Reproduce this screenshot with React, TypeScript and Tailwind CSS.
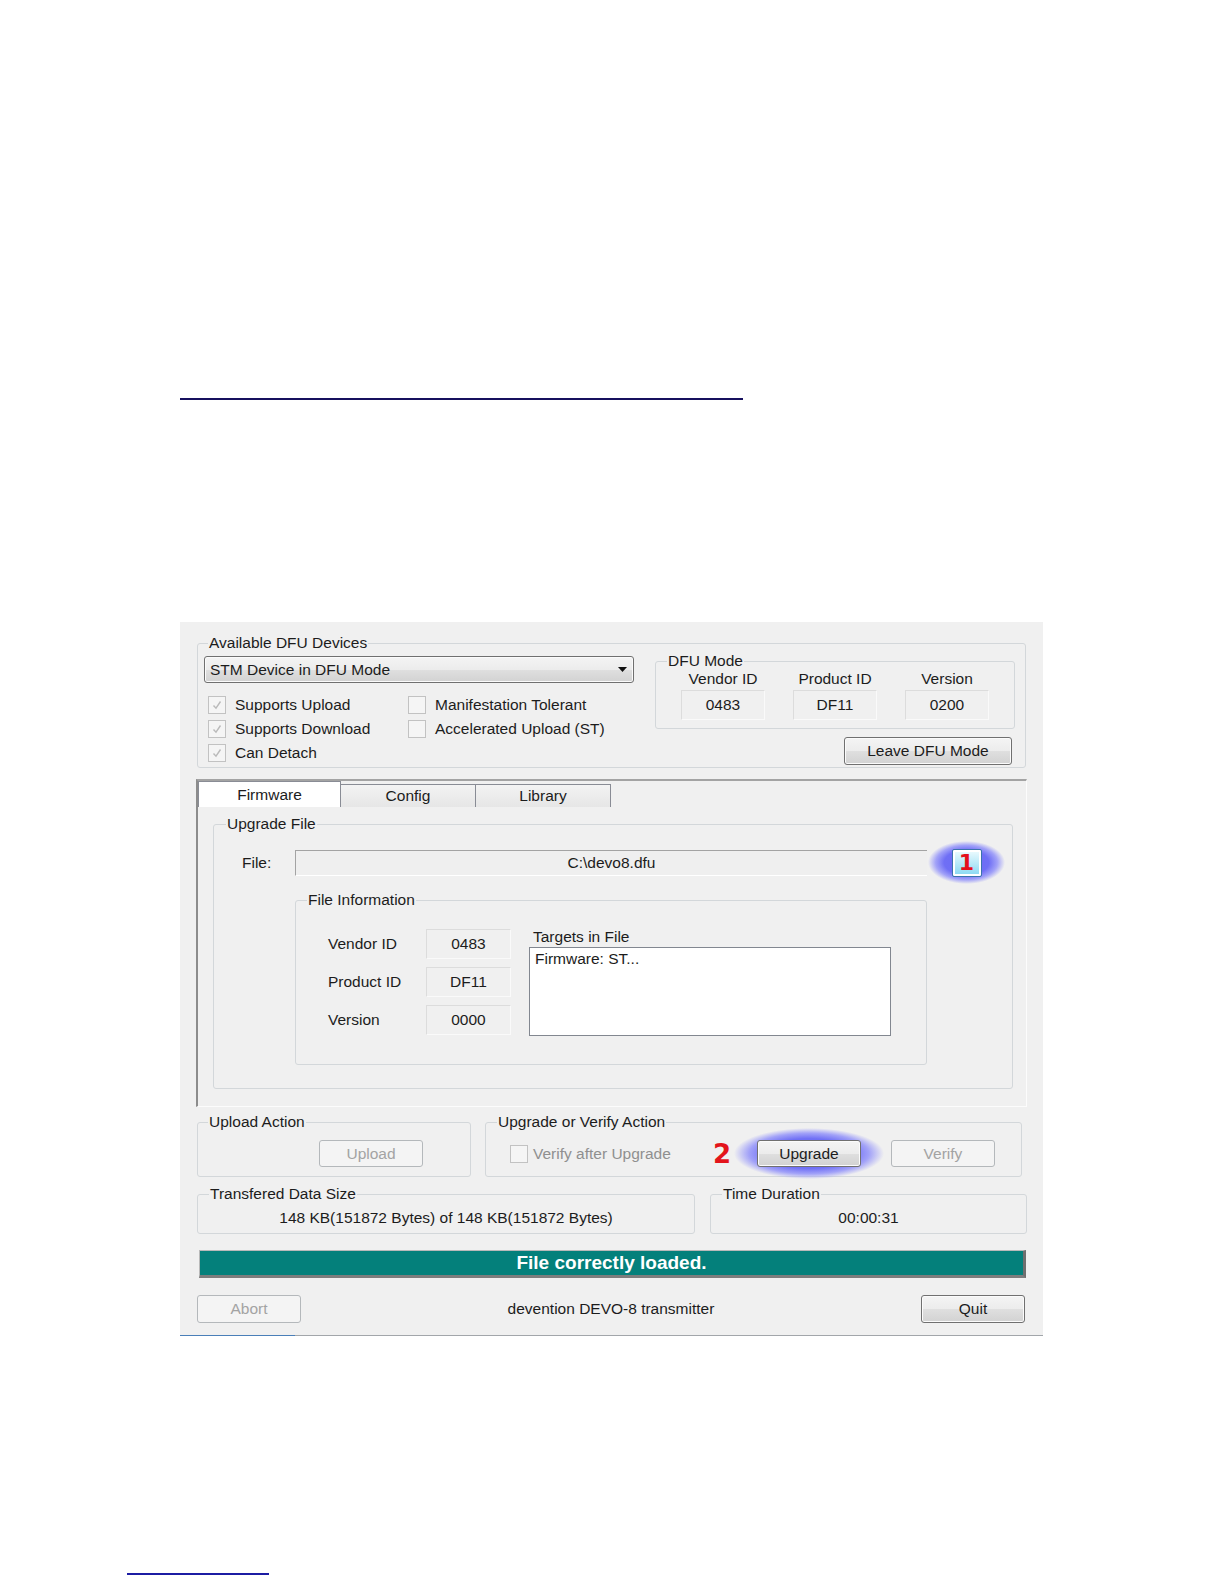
import type { ReactNode } from 'react';

const FONT = "font-['Liberation_Sans',Arial,sans-serif]";
const BTN_BG =
  'border-[#707070] bg-[linear-gradient(#f4f4f4_0%,#ececec_50%,#dfdfdf_51%,#d2d2d2_100%)] shadow-[inset_0_0_0_1px_#fbfbfb] text-[#1c1c1c]';
const GLOW =
  'bg-[radial-gradient(ellipse_closest-side,#6a6af4_0%,#6f6ff5_58%,#a2a2f8_80%,rgba(214,214,255,0)_100%)]';

function Group({
  label,
  className = '',
  legendClass = 'ml-[10px]',
  children,
}: {
  label: string;
  className?: string;
  legendClass?: string;
  children?: ReactNode;
}) {
  return (
    <fieldset className={`min-w-0 rounded-[3px] border border-[#d3d7da] ${className}`}>
      <legend className={`px-[1px] leading-[18px] whitespace-nowrap ${legendClass}`}>{label}</legend>
      {children}
    </fieldset>
  );
}

function Btn({
  children,
  disabled,
  className = '',
}: {
  children: ReactNode;
  disabled?: boolean;
  className?: string;
}) {
  return (
    <div
      className={`flex items-center justify-center rounded-[3px] border ${
        disabled ? 'border-[#b4b8bb] bg-[#f4f4f4] text-[#a3a3a3]' : BTN_BG
      } ${className}`}
    >
      {children}
    </div>
  );
}

function Check({ checked }: { checked?: boolean }) {
  return (
    <div className="w-[18px] h-[18px] shrink-0 border border-[#c2c2c2] bg-[#f5f5f5] flex items-center justify-center">
      {checked && (
        <svg width="12" height="12" viewBox="0 0 12 12">
          <path d="M2.5 6.5 L5 9.2 L9.5 2.5" fill="none" stroke="#bababa" strokeWidth="1.4" />
        </svg>
      )}
    </div>
  );
}

function CheckItem({ label, checked, className = '' }: { label: string; checked?: boolean; className?: string }) {
  return (
    <div className={`flex items-center ${className}`}>
      <Check checked={checked} />
      <span className="ml-[9px] whitespace-nowrap">{label}</span>
    </div>
  );
}

function ReadBox({ value, className = '' }: { value: string; className?: string }) {
  return (
    <div
      className={`h-[30px] border border-[#dcdcdc] border-b-[#fafafa] border-r-[#fafafa] bg-[#f0f0f0] text-center leading-[28px] ${className}`}
    >
      {value}
    </div>
  );
}

export default function App() {
  return (
    <div className={`w-[1224px] h-[1584px] bg-white overflow-hidden ${FONT} text-[15.5px] text-[#1c1c1c]`}>
      {/* link underline */}
      <div className="pt-[398px]">
        <div className="ml-[180px] w-[563px] h-[2px] bg-[#17105e]" />
      </div>

      {/* DfuSe dialog */}
      <div className="mt-[222px] ml-[180px] w-[863px] h-[713px] bg-[#f0f0f0] pl-[17px] pt-[12px]">
        {/* Available DFU Devices */}
        <Group label="Available DFU Devices" className="w-[829px]">
          <div className="flex pl-[6px] pb-[2px]">
            <div className="w-[430px] pt-[4px]">
              <div className={`h-[27px] rounded-[3px] border flex items-center pl-[5px] pr-[6px] ${BTN_BG}`}>
                <span className="flex-1">STM Device in DFU Mode</span>
                <svg width="9" height="5" viewBox="0 0 9 5">
                  <path d="M0 0H9L4.5 5Z" fill="#111" />
                </svg>
              </div>
              <div className="mt-[10px] pl-[4px]">
                <div className="flex h-[24px] items-center">
                  <CheckItem checked label="Supports Upload" className="w-[200px]" />
                  <CheckItem label="Manifestation Tolerant" />
                </div>
                <div className="flex h-[24px] items-center">
                  <CheckItem checked label="Supports Download" className="w-[200px]" />
                  <CheckItem label="Accelerated Upload (ST)" />
                </div>
                <div className="flex h-[24px] items-center">
                  <CheckItem checked label="Can Detach" />
                </div>
              </div>
            </div>

            <div className="ml-[21px] w-[360px] flex flex-col">
              <Group label="DFU Mode" legendClass="ml-[11px]">
                <div className="flex gap-[28px] pl-[25px] pb-[8px]">
                  {[
                    ['Vendor ID', '0483'],
                    ['Product ID', 'DF11'],
                    ['Version', '0200'],
                  ].map(([h, v]) => (
                    <div key={h} className="w-[84px] flex flex-col items-center">
                      <div className="leading-[18px] whitespace-nowrap">{h}</div>
                      <ReadBox value={v} className="mt-[2px] w-[84px]" />
                    </div>
                  ))}
                </div>
              </Group>
              <Btn className="mt-[8px] self-end mr-[3px] w-[168px] h-[28px]">Leave DFU Mode</Btn>
            </div>
          </div>
        </Group>

        {/* Tab control */}
        <div className="mt-[11px] -ml-[1px] w-[831px] h-[328px] border-t-2 border-l-2 border-t-[#a3a3a3] border-l-[#8c8c8c] border-r border-b border-r-[#fcfcfc] border-b-[#fcfcfc]">
          <div className="flex items-end h-[26px]">
            <div className="w-[143px] h-[26px] bg-white border border-b-0 border-[#898c95] flex items-center justify-center">
              Firmware
            </div>
            <div className="-ml-px w-[136px] h-[23px] border border-b-0 border-[#898c95] bg-[linear-gradient(#f3f3f3,#e6e6e6)] flex items-center justify-center">
              Config
            </div>
            <div className="-ml-px w-[136px] h-[23px] border border-b-0 border-[#898c95] bg-[linear-gradient(#f3f3f3,#e6e6e6)] flex items-center justify-center">
              Library
            </div>
          </div>

          <Group label="Upgrade File" className="mt-[8px] ml-[15px] w-[800px]" legendClass="ml-[12px]">
            <div className="pb-[23px]">
              <div className="flex items-center mt-[8px] pl-[28px]">
                <div className="w-[53px]">File:</div>
                <div className="w-[632px] h-[26px] border-t border-l border-[#a3a3a3] border-b border-b-white bg-[#efefef] flex items-center justify-center">
                  C:\devo8.dfu
                </div>
                <div className={`ml-[1px] w-[77px] h-[43px] flex items-center justify-center ${GLOW}`}>
                  <div className="w-[30px] h-[28px] rounded-[2px] border border-[#3b73ad] bg-[linear-gradient(#effcff,#86d7f2)] shadow-[inset_0_0_0_2px_#ffffff] flex items-center justify-center">
                    <span className="font-['DejaVu_Sans',sans-serif] font-bold text-[22px] leading-none text-[#e4101a]">
                      1
                    </span>
                  </div>
                </div>
              </div>

              <Group label="File Information" className="mt-[7px] ml-[81px] w-[632px]" legendClass="ml-[11px]">
                <div className="flex mt-[19px] pl-[32px] pb-[28px]">
                  <div className="pt-[1px]">
                    {[
                      ['Vendor ID', '0483'],
                      ['Product ID', 'DF11'],
                      ['Version', '0000'],
                    ].map(([l, v], i) => (
                      <div key={l} className={`flex items-center ${i ? 'mt-[8px]' : ''}`}>
                        <div className="w-[98px]">{l}</div>
                        <ReadBox value={v} className="w-[85px]" />
                      </div>
                    ))}
                  </div>
                  <div className="ml-[18px]">
                    <div className="pl-[4px] leading-[18px]">Targets in File</div>
                    <div className="mt-[1px] w-[362px] h-[89px] bg-white border border-[#828790] pl-[5px] pt-[2px] leading-[18px]">
                      Firmware: ST...
                    </div>
                  </div>
                </div>
              </Group>
            </div>
          </Group>
        </div>

        {/* Actions */}
        <div className="flex mt-[6px] gap-[14px]">
          <Group label="Upload Action" className="w-[274px]" legendClass="ml-[10px]">
            <div className="mt-[9px] pb-[9px] pl-[121px]">
              <Btn disabled className="w-[104px] h-[27px]">
                Upload
              </Btn>
            </div>
          </Group>
          <Group label="Upgrade or Verify Action" className="w-[537px]" legendClass="ml-[11px]">
            <div className="flex items-center h-[27px] mt-[9px] mb-[9px] pl-[24px] pr-[26px]">
              <Check />
              <span className="ml-[5px] text-[#8f8f8f]">Verify after Upgrade</span>
              <span className="ml-auto font-['DejaVu_Sans',sans-serif] font-bold text-[26px] leading-none text-[#e3141b]">
                2
              </span>
              <div className={`ml-[3px] -my-[12px] px-[23px] py-[12px] ${GLOW}`}>
                <Btn className="w-[104px] h-[27px]">Upgrade</Btn>
              </div>
              <Btn disabled className="ml-[7px] w-[104px] h-[27px]">
                Verify
              </Btn>
            </div>
          </Group>
        </div>

        {/* Transfer info */}
        <div className="flex mt-[8px] gap-[15px]">
          <Group label="Transfered Data Size" className="w-[498px]" legendClass="ml-[11px]">
            <div className="mt-[6px] pb-[6px] text-center leading-[18px]">
              148 KB(151872 Bytes) of 148 KB(151872 Bytes)
            </div>
          </Group>
          <Group label="Time Duration" className="w-[317px]" legendClass="ml-[11px]">
            <div className="mt-[6px] pb-[6px] text-center leading-[18px]">00:00:31</div>
          </Group>
        </div>

        {/* Status */}
        <div className="mt-[16px] ml-[2px] w-[827px] h-[28px] bg-[#04807b] border-t border-l border-[#b9b9b9] border-b-[3px] border-r-[3px] border-b-[#7d7d7d] border-r-[#6f6f6f] flex items-center justify-center text-white font-bold text-[19px]">
          File correctly loaded.
        </div>

        {/* Footer */}
        <div className="mt-[17px] w-[828px] flex items-center justify-between">
          <Btn disabled className="w-[104px] h-[28px]">
            Abort
          </Btn>
          <span>devention DEVO-8 transmitter</span>
          <Btn className="w-[104px] h-[28px]">Quit</Btn>
        </div>
      </div>
      <div className="ml-[180px] w-[863px] h-[1px] bg-[linear-gradient(to_right,#4a7fb8_0px,#4a7fb8_115px,#a2a6aa_115px)]" />

      {/* second link underline */}
      <div className="mt-[237px] ml-[127px] w-[142px] h-[2px] bg-[#1c1ca3]" />
    </div>
  );
}
